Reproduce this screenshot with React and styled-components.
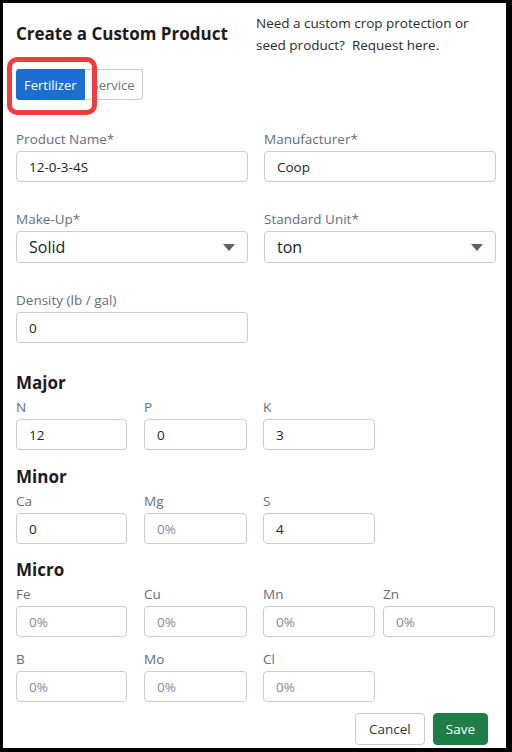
import React from 'react';
import styled, { createGlobalStyle } from 'styled-components';

const GlobalStyle = createGlobalStyle`
  html, body {
    margin: 0;
    padding: 0;
    background: #000;
  }
  body {
    font-family: "Open Sans", "Noto Sans", sans-serif;
  }
`;

const Panel = styled.div`
  position: relative;
  box-sizing: border-box;
  margin: 3px 6px 0 3px;
  width: 503px;
  height: 745px;
  background: #fff;
  padding: 10px 13px 0 13px;
  color: #212529;
`;

const Header = styled.div`
  display: flex;
  justify-content: space-between;
`;

const Title = styled.h1`
  margin: 10px 0 0 0;
  font-size: 17px;
  line-height: 22px;
  font-weight: 700;
  color: #1b1b1b;
`;

const Note = styled.p`
  margin: 0;
  width: 237px;
  font-size: 13.5px;
  line-height: 21.5px;
  color: #2b2b2b;
`;

const Toggle = styled.div`
  display: flex;
  margin-top: 13px;
`;

const ToggleButton = styled.button`
  height: 31px;
  padding: 0 7px;
  font-family: inherit;
  font-size: 13px;
  border-radius: ${(p) => (p.$active ? '3px 0 0 3px' : '0 3px 3px 0')};
  border: 1px solid ${(p) => (p.$active ? '#1a6fd1' : '#c8ccd3')};
  border-left-width: ${(p) => (p.$active ? '1px' : '0')};
  background: ${(p) => (p.$active ? '#1a6fd1' : '#fff')};
  color: ${(p) => (p.$active ? '#fff' : '#6c7280')};
`;

const Highlight = styled.div`
  position: absolute;
  left: 4px;
  top: 54px;
  width: 80px;
  height: 48px;
  border: 5px solid #f23c3c;
  border-radius: 10px;
  pointer-events: none;
`;

const TwoCol = styled.div`
  display: grid;
  grid-template-columns: 232px 232px;
  column-gap: 16px;
  row-gap: 27px;
  margin-top: 29px;
`;

const FourCol = styled.div`
  display: grid;
  grid-template-columns: 128px 119px 120px 112px;
  row-gap: 12px;
`;

const Field = styled.div`
  display: flex;
  flex-direction: column;
`;

const Label = styled.label`
  font-size: 13.5px;
  line-height: 20px;
  color: #666d7b;
  margin-bottom: 2px;
`;

const Input = styled.div`
  box-sizing: border-box;
  width: ${(p) => p.$w || '100%'};
  height: ${(p) => (p.$select ? '32px' : '31px')};
  border: 1px solid #c9ccd3;
  border-radius: 4px;
  padding: 0 12px;
  display: flex;
  align-items: center;
  justify-content: space-between;
  font-size: ${(p) => (p.$select ? '16px' : '13.5px')};
  color: ${(p) => (p.$placeholder ? '#858a94' : '#212529')};
`;

const Section = styled.h2`
  margin: ${(p) => p.$top || '29px'} 0 3px 0;
  font-size: 17px;
  line-height: 22px;
  font-weight: 700;
  color: #1b1b1b;
`;

const Footer = styled.div`
  display: flex;
  justify-content: flex-end;
  gap: 8px;
  margin-top: 11px;
  padding-right: 5px;
`;

const Button = styled.button`
  height: 32px;
  padding: 0 ${(p) => (p.$primary ? '12px' : '13px')};
  font-family: inherit;
  font-size: 13.5px;
  border-radius: 4px;
  border: 1px solid ${(p) => (p.$primary ? '#1e7e46' : '#c8ccd3')};
  background: ${(p) => (p.$primary ? '#1e7e46' : '#fff')};
  color: ${(p) => (p.$primary ? '#fff' : '#333')};
`;

const Caret = () => (
  <svg width="12" height="7" viewBox="0 0 12 7">
    <path d="M0 0 L12 0 L6 7 Z" fill="#5c6170" />
  </svg>
);

const TextField = ({ label, value, placeholder, w }) => (
  <Field>
    <Label>{label}</Label>
    <Input $w={w} $placeholder={!value}>{value || placeholder}</Input>
  </Field>
);

const SelectField = ({ label, value }) => (
  <Field>
    <Label>{label}</Label>
    <Input $select>
      <span>{value}</span>
      <Caret />
    </Input>
  </Field>
);

const widths = ['111px', '103px', '112px', '112px'];

const NutrientRow = ({ items }) => (
  <FourCol>
    {items.map((it, i) =>
      it ? (
        <TextField key={it.label} label={it.label} value={it.value} placeholder="0%" w={widths[i]} />
      ) : (
        <div key={i} />
      )
    )}
  </FourCol>
);

export default function App() {
  return (
    <>
      <GlobalStyle />
      <Panel>
        <Header>
          <Title>Create a Custom Product</Title>
          <Note>Need a custom crop protection or seed product?&nbsp; Request here.</Note>
        </Header>
        <Toggle>
          <ToggleButton $active>Fertilizer</ToggleButton>
          <ToggleButton>Service</ToggleButton>
        </Toggle>
        <Highlight />
        <TwoCol>
          <TextField label="Product Name*" value="12-0-3-4S" />
          <TextField label="Manufacturer*" value="Coop" />
          <SelectField label="Make-Up*" value="Solid" />
          <SelectField label="Standard Unit*" value="ton" />
          <TextField label="Density (lb / gal)" value="0" />
        </TwoCol>

        <Section>Major</Section>
        <NutrientRow items={[{ label: 'N', value: '12' }, { label: 'P', value: '0' }, { label: 'K', value: '3' }]} />

        <Section $top="16px">Minor</Section>
        <NutrientRow items={[{ label: 'Ca', value: '0' }, { label: 'Mg' }, { label: 'S', value: '4' }]} />

        <Section $top="15px">Micro</Section>
        <FourCol>
          <TextField label="Fe" placeholder="0%" w={widths[0]} />
          <TextField label="Cu" placeholder="0%" w={widths[1]} />
          <TextField label="Mn" placeholder="0%" w={widths[2]} />
          <TextField label="Zn" placeholder="0%" w={widths[3]} />
          <TextField label="B" placeholder="0%" w={widths[0]} />
          <TextField label="Mo" placeholder="0%" w={widths[1]} />
          <TextField label="Cl" placeholder="0%" w={widths[2]} />
        </FourCol>

        <Footer>
          <Button>Cancel</Button>
          <Button $primary>Save</Button>
        </Footer>
      </Panel>
    </>
  );
}
